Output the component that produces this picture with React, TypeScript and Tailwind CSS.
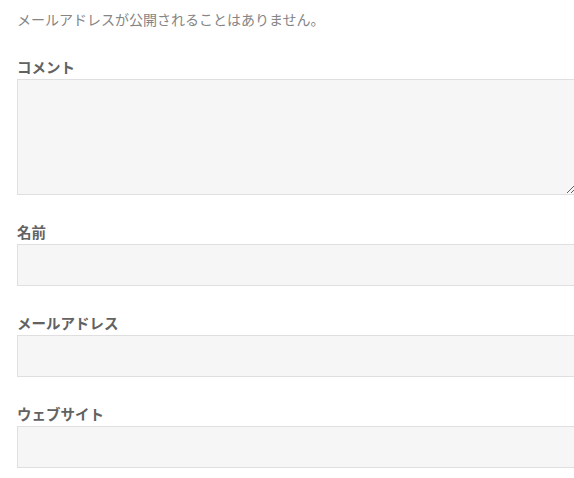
const fields = [
  { label: "名前", type: "text" },
  { label: "メールアドレス", type: "email" },
  { label: "ウェブサイト", type: "url" },
];

export default function App() {
  return (
    <div className="w-[574px] h-[478px] overflow-hidden bg-white pt-[7px] pl-[17px] font-['Noto_Sans_CJK_JP',sans-serif]">
      <div className="w-[559px]">
        {/* Notice */}
        <p className="text-[14px] leading-[24px] text-[#858585]">
          メールアドレスが公開されることはありません。
        </p>

        {/* Comment */}
        <div className="mt-[26px]">
          <label className="block text-[14.5px] leading-[20px] font-bold text-[#626262] mb-[2px]">
            コメント
          </label>
          <textarea className="block w-full h-[116px] bg-[#f6f6f6] border border-[#dfdfdf] outline-none" />
        </div>

        {/* Fields */}
        {fields.map((f) => (
          <div key={f.label} className="mt-[27px]">
            <label className="block text-[14.5px] leading-[20px] font-bold text-[#626262] mb-[2px]">
              {f.label}
            </label>
            <input
              type={f.type}
              className="block w-full h-[42px] bg-[#f6f6f6] border border-[#dfdfdf] outline-none"
            />
          </div>
        ))}
      </div>
    </div>
  );
}
